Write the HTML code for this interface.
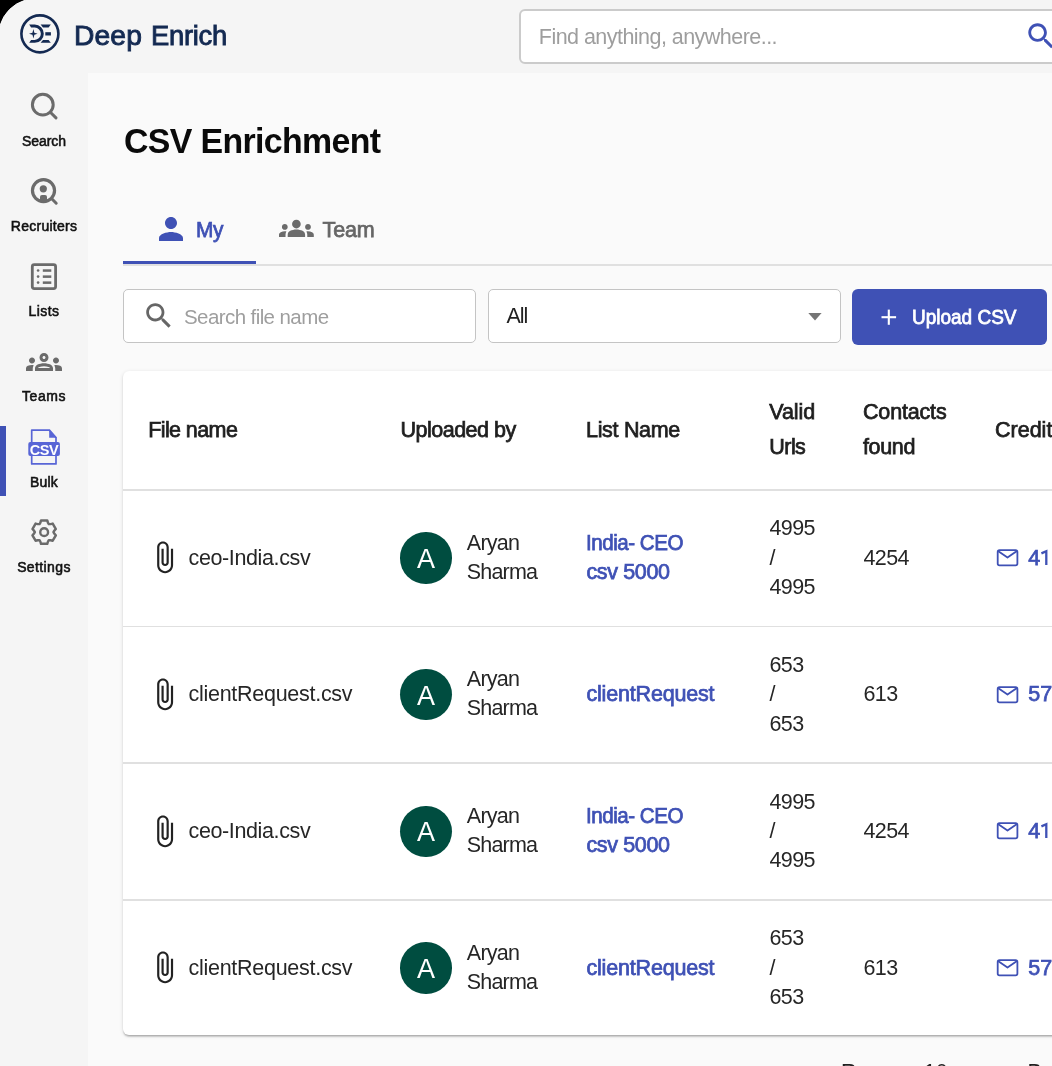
<!DOCTYPE html>
<html><head><meta charset="utf-8"><style>
html,body{margin:0;padding:0;}
body{width:1052px;height:1066px;overflow:hidden;position:relative;background:#000;font-family:"Liberation Sans",sans-serif;-webkit-font-smoothing:antialiased;}
#root{position:absolute;left:0;top:0;width:1052px;height:1066px;will-change:transform;}
.t{position:absolute;white-space:nowrap;}
svg{overflow:visible;}
</style></head><body><div id="root">
<div style="position:absolute;left:0;top:0;width:1052px;height:1066px;background:#f5f5f5;"></div>
<svg style="position:absolute;left:0;top:0" width="30" height="30"><path d="M0 0 L25.5 0 Q6.2 6.2 0 25.5 Z" fill="#000"/><path d="M25.5 0 Q6.2 6.2 0 25.5" fill="none" stroke="#fff" stroke-width="0.9"/></svg>
<div style="position:absolute;left:88px;top:73px;width:964px;height:993px;background:#fafafa;"></div>
<svg style="position:absolute;left:0;top:0" width="80" height="72" viewBox="0 0 80 72">
<circle cx="39.9" cy="33.85" r="18.5" fill="none" stroke="#142a52" stroke-width="2.6"/>
<path fill="#142a52" d="M29.2 24.6 L34.7 24.6 A9.1 9.1 0 0 1 34.7 42.8 L29.2 42.8 L31.1 39.9 L34.7 39.9 A6.1 6.1 0 0 0 34.7 27.6 L31.1 27.6 Z"/>
<path fill="#142a52" d="M40.6 24.6 L50.8 24.6 L48.6 27.6 L43.0 27.6 Z"/>
<path fill="#142a52" d="M45.3 32.2 L50.9 32.2 L50.9 35.5 L45.3 35.5 Z"/>
<path fill="#142a52" d="M43.0 39.9 L48.6 39.9 L50.8 42.8 L40.6 42.8 Z"/>
<path fill="#142a52" d="M33.4 28.9 L34.35 32.85 L37.6 33.8 L34.35 34.75 L33.4 38.6 L32.45 34.75 L29.0 33.8 L32.45 32.85 Z"/>
</svg>
<div class="t" style="left:73.60px;top:22.00px;font-size:28.00px;line-height:28.00px;transform:scaleX(1.0079);transform-origin:0 0;letter-spacing:0.132px;color:#142a52;font-weight:400;-webkit-text-stroke:0.9px #142a52;">Deep</div>
<div class="t" style="left:151.00px;top:22.00px;font-size:28.00px;line-height:28.00px;transform:scaleX(0.9788);transform-origin:0 0;letter-spacing:-0.287px;color:#142a52;font-weight:400;-webkit-text-stroke:0.9px #142a52;">Enrich</div>
<div style="position:absolute;left:519px;top:9px;width:560px;height:55px;box-sizing:border-box;border:2px solid #cbcbcb;border-radius:6px;background:#fff;"></div>
<div class="t" style="left:538.80px;top:27.00px;font-size:21.50px;line-height:21.50px;letter-spacing:-0.537px;color:#9e9e9e;">Find anything, anywhere...</div>
<svg style="position:absolute;left:1023.7px;top:18.9px" width="34.3" height="34.3" viewBox="0 0 24 24"><path fill="#3f51b5" d="M15.5 14h-.79l-.28-.27C15.41 12.59 16 11.11 16 9.5 16 5.91 13.09 3 9.5 3S3 5.91 3 9.5 5.91 16 9.5 16c1.61 0 3.09-.59 4.23-1.57l.27.28v.79l5 4.99L20.49 19l-4.99-5zm-6 0C7.01 14 5 11.99 5 9.5S7.01 5 9.5 5 14 7.01 14 9.5 11.99 14 9.5 14z"/></svg>
<div style="position:absolute;left:0;top:426px;width:6px;height:70px;background:#3f51b5;"></div>
<svg style="position:absolute;left:0;top:80px" width="88" height="50"><circle cx="42.8" cy="24.7" r="10.4" fill="none" stroke="#6b6b6b" stroke-width="3"/><line x1="50.6" y1="32.5" x2="56" y2="37.9" stroke="#6b6b6b" stroke-width="3" stroke-linecap="round"/></svg>
<div class="t" style="left:21.95px;top:134.00px;font-size:14.00px;line-height:14.00px;-webkit-text-stroke:0.55px #111;letter-spacing:-0.043px;color:#111;">Search</div>
<svg style="position:absolute;left:0;top:165px" width="88" height="50"><circle cx="43.5" cy="25.6" r="11.05" fill="none" stroke="#6b6b6b" stroke-width="3.2"/><circle cx="43.3" cy="23.8" r="3.6" fill="#6b6b6b"/><path d="M40 36 L40 32 Q40 30 42 30 L45 30 Q47 30 47 32 L47 36 Z" fill="#6b6b6b"/><line x1="51.8" y1="33.8" x2="56.2" y2="38.2" stroke="#6b6b6b" stroke-width="3" stroke-linecap="round"/></svg>
<div class="t" style="left:10.80px;top:219.00px;font-size:14.00px;line-height:14.00px;-webkit-text-stroke:0.55px #111;letter-spacing:0.261px;color:#111;">Recruiters</div>
<svg style="position:absolute;left:0;top:250px" width="88" height="50"><rect x="32.3" y="14.7" width="23.3" height="23.9" rx="2" fill="none" stroke="#6b6b6b" stroke-width="2.8"/><circle cx="38.1" cy="20.5" r="1.3" fill="#6b6b6b"/><circle cx="38.1" cy="26.6" r="1.3" fill="#6b6b6b"/><circle cx="38.1" cy="32.6" r="1.3" fill="#6b6b6b"/><rect x="42.8" y="19.3" width="8.5" height="2.5" fill="#6b6b6b"/><rect x="42.8" y="25.4" width="8.5" height="2.5" fill="#6b6b6b"/><rect x="42.8" y="31.4" width="8.5" height="2.5" fill="#6b6b6b"/></svg>
<div class="t" style="left:28.50px;top:304.00px;font-size:14.00px;line-height:14.00px;-webkit-text-stroke:0.55px #111;letter-spacing:0.443px;color:#111;">Lists</div>
<svg style="position:absolute;left:26.4px;top:344px" width="36" height="36" viewBox="0 0 24 24"><path fill="#6b6b6b" d="M4,13c1.1,0,2-0.9,2-2c0-1.1-0.9-2-2-2s-2,0.9-2,2C2,12.1,2.9,13,4,13z M5.13,14.1C4.76,14.04,4.39,14,4,14c-0.99,0-1.93,0.21-2.78,0.58C0.48,14.9,0,15.62,0,16.43V18l4.5,0v-1.61C4.5,15.56,4.73,14.78,5.13,14.1z M20,13c1.1,0,2-0.9,2-2c0-1.1-0.9-2-2-2s-2,0.9-2,2C18,12.1,18.9,13,20,13z M24,16.43c0-0.81-0.48-1.53-1.22-1.85C21.93,14.21,20.99,14,20,14c-0.39,0-0.76,0.04-1.13,0.1c0.4,0.68,0.63,1.46,0.63,2.29V18l4.5,0V16.43z M16.24,13.65c-1.17-0.52-2.61-0.9-4.24-0.9c-1.63,0-3.070.39-4.24,0.9C6.68,14.130,6,15.21,6,16.39V18h12v-1.61C18,15.21,17.32,14.13,16.24,13.65z M8.07,16c0.09-0.23,0.13-0.39,0.91-0.69c0.97-0.38,1.99-0.56,3.02-0.56s2.05,0.18,3.02,0.56c0.77,0.3,0.81,0.46,0.91,0.69H8.07z M12,8c0.55,0,1,0.45,1,1s-0.45,1-1,1s-1-0.45-1-1S11.450,8,12,8 M12,6c-1.66,0-3,1.34-3,3c0,1.66,1.34,3,3,3s3-1.34,3-3C15,7.34,13.66,6,12,6L12,6z"/></svg>
<div class="t" style="left:22.10px;top:389.00px;font-size:14.00px;line-height:14.00px;-webkit-text-stroke:0.55px #111;letter-spacing:0.513px;color:#111;">Teams</div>
<svg style="position:absolute;left:0;top:420px" width="88" height="50">
<path d="M31.7 10.1 L49.4 10.1 L56 17.6 L56 43.9 L31.7 43.9 Z" fill="none" stroke="#5865d6" stroke-width="1.7" stroke-linejoin="round"/>
<path d="M49.2 9.4 L56.8 17.8 L49.2 17.8 Z" fill="#5865d6"/>
<rect x="28.3" y="22" width="31.6" height="14" rx="2" fill="#5865d6"/>
<text x="44.1" y="34.6" text-anchor="middle" font-family="Liberation Sans" font-weight="700" font-size="14.5" fill="#fff" letter-spacing="-0.4">CSV</text>
</svg>
<div class="t" style="left:30.00px;top:475.00px;font-size:14.00px;line-height:14.00px;-webkit-text-stroke:0.55px #111;letter-spacing:0.191px;color:#111;">Bulk</div>
<svg style="position:absolute;left:0;top:0" width="88" height="560"><path d="M40.39 522.56 L41.02 520.46 L47.28 520.46 L47.91 522.56 L48.80 524.10 L50.58 524.10 L52.71 523.59 L55.84 529.02 L54.33 530.61 L53.45 532.15 L54.33 533.69 L55.84 535.28 L52.71 540.71 L50.58 540.20 L48.80 540.20 L47.91 541.74 L47.28 543.84 L41.02 543.84 L40.39 541.74 L39.50 540.20 L37.72 540.20 L35.59 540.71 L32.46 535.28 L33.97 533.69 L34.85 532.15 L33.97 530.61 L32.46 529.02 L35.59 523.59 L37.72 524.10 L39.50 524.10 Z" fill="none" stroke="#6b6b6b" stroke-width="2.45" stroke-linejoin="round"/><circle cx="44.15" cy="532.15" r="3.9" fill="none" stroke="#6b6b6b" stroke-width="2.4"/></svg>
<div class="t" style="left:17.15px;top:560.00px;font-size:14.00px;line-height:14.00px;-webkit-text-stroke:0.55px #111;letter-spacing:0.389px;color:#111;">Settings</div>
<div class="t" style="left:124.30px;top:123.00px;font-size:35.00px;line-height:35.00px;font-weight:700;transform:scaleX(0.9675);transform-origin:0 0;letter-spacing:-0.658px;color:#0a0a0a;">CSV Enrichment</div>
<svg style="position:absolute;left:152.9px;top:211.3px" width="36" height="36" viewBox="0 0 24 24"><path fill="#3f51b5" d="M12 12c2.21 0 4-1.79 4-4s-1.79-4-4-4-4 1.79-4 4 1.79 4 4 4zm0 2c-2.67 0-8 1.34-8 4v2h16v-2c0-2.66-5.33-4-8-4z"/></svg>
<div class="t" style="left:196.20px;top:220.00px;font-size:21.50px;line-height:21.50px;-webkit-text-stroke:0.75px #3f51b5;transform:scaleX(0.9711);transform-origin:0 0;letter-spacing:-0.427px;color:#3f51b5;">My</div>
<svg style="position:absolute;left:279.2px;top:211.3px" width="34.8" height="34.8" viewBox="0 0 24 24"><path fill="#6b6b6b" d="M12 12.75c1.63 0 3.07.39 4.24.9 1.08.48 1.76 1.56 1.76 2.73V18H6v-1.61c0-1.18.68-2.26 1.76-2.73 1.17-.52 2.61-.91 4.24-.91zM4 13c1.1 0 2-.9 2-2s-.9-2-2-2-2 .9-2 2 .9 2 2 2zm1.13 1.1c-.37-.06-.74-.1-1.13-.1-.99 0-1.93.21-2.78.58C.48 14.9 0 15.62 0 16.43V18h4.5v-1.61c0-.83.23-1.610.63-2.29zM20 13c1.1 0 2-.9 2-2s-.9-2-2-2-2 .9-2 2 .9 2 2 2zm4 3.43c0-.81-.48-1.53-1.22-1.85-.85-.37-1.79-.58-2.78-.58-.39 0-.76.04-1.13.1.4.68.63 1.46.63 2.29V18H24v-1.57zM12 6c1.66 0 3 1.34 3 3s-1.34 3-3 3-3-1.34-3-3 1.34-3 3-3z"/></svg>
<div class="t" style="left:322.60px;top:220.00px;font-size:21.50px;line-height:21.50px;-webkit-text-stroke:0.75px #666;letter-spacing:-0.168px;color:#666;">Team</div>
<div style="position:absolute;left:123px;top:264px;width:929px;height:2px;background:#e0e0e0;"></div>
<div style="position:absolute;left:123px;top:261px;width:132.7px;height:3px;background:#3f51b5;"></div>
<div style="position:absolute;left:123px;top:289px;width:353px;height:54px;box-sizing:border-box;border:1.5px solid #c4c4c4;border-radius:5px;background:#fff;"></div>
<svg style="position:absolute;left:141.7px;top:298.6px" width="33.6" height="33.6" viewBox="0 0 24 24"><path fill="#666" d="M15.5 14h-.79l-.28-.27C15.41 12.59 16 11.11 16 9.5 16 5.91 13.09 3 9.5 3S3 5.91 3 9.5 5.91 16 9.5 16c1.61 0 3.09-.59 4.23-1.57l.27.28v.79l5 4.99L20.49 19l-4.99-5zm-6 0C7.01 14 5 11.990 5 9.5S7.01 5 9.5 5 14 7.01 14 9.5 11.99 14 9.5 14z"/></svg>
<div class="t" style="left:184.00px;top:307.00px;font-size:20.50px;line-height:20.50px;letter-spacing:-0.583px;color:#9e9e9e;">Search file name</div>
<div style="position:absolute;left:487.5px;top:289px;width:353px;height:54px;box-sizing:border-box;border:1.5px solid #c4c4c4;border-radius:5px;background:#fff;"></div>
<div class="t" style="left:506.40px;top:306.00px;font-size:21.50px;line-height:21.50px;letter-spacing:-1.031px;color:#212121;">All</div>
<svg style="position:absolute;left:800px;top:305px" width="30" height="20"><path d="M8.3 8 L21.6 8 L15 15.4 Z" fill="#757575"/></svg>
<div style="position:absolute;left:852px;top:289px;width:194.5px;height:56px;border-radius:6px;background:#3f51b5;"></div>
<svg style="position:absolute;left:870px;top:300px" width="40" height="35"><line x1="11.5" y1="17.2" x2="26.1" y2="17.2" stroke="#fff" stroke-width="2.1"/><line x1="18.8" y1="9.6" x2="18.8" y2="24.8" stroke="#fff" stroke-width="2.1"/></svg>
<div class="t" style="left:912.20px;top:307.00px;font-size:20.50px;line-height:20.50px;transform:scaleX(0.9263);transform-origin:0 0;color:#fff;-webkit-text-stroke:0.8px #fff;">Upload CSV</div>
<div style="position:absolute;left:123px;top:371.4px;width:1000px;height:663.6px;background:#fff;border-radius:6px;box-shadow:0 2px 1.5px -1px rgba(0,0,0,0.17),0 1.5px 1.5px 0 rgba(0,0,0,0.12),0 1px 4px 0 rgba(0,0,0,0.11);"></div>
<div class="t" style="left:148.20px;top:420.00px;font-size:21.50px;line-height:21.50px;-webkit-text-stroke:0.75px #1f1f1f;letter-spacing:-0.589px;color:#1f1f1f;">File name</div>
<div class="t" style="left:400.50px;top:420.00px;font-size:21.50px;line-height:21.50px;-webkit-text-stroke:0.75px #1f1f1f;letter-spacing:-0.502px;color:#1f1f1f;">Uploaded by</div>
<div class="t" style="left:586.00px;top:420.00px;font-size:21.50px;line-height:21.50px;-webkit-text-stroke:0.75px #1f1f1f;letter-spacing:-0.309px;color:#1f1f1f;">List Name</div>
<div class="t" style="left:769.30px;top:402.00px;font-size:21.50px;line-height:21.50px;-webkit-text-stroke:0.75px #1f1f1f;letter-spacing:-0.102px;color:#1f1f1f;">Valid</div>
<div class="t" style="left:769.30px;top:437.00px;font-size:21.50px;line-height:21.50px;-webkit-text-stroke:0.75px #1f1f1f;letter-spacing:-0.553px;color:#1f1f1f;">Urls</div>
<div class="t" style="left:863.00px;top:402.00px;font-size:21.50px;line-height:21.50px;-webkit-text-stroke:0.75px #1f1f1f;letter-spacing:-0.168px;color:#1f1f1f;">Contacts</div>
<div class="t" style="left:863.00px;top:437.00px;font-size:21.50px;line-height:21.50px;-webkit-text-stroke:0.75px #1f1f1f;letter-spacing:-0.360px;color:#1f1f1f;">found</div>
<div class="t" style="left:995.00px;top:420.00px;font-size:21.50px;line-height:21.50px;-webkit-text-stroke:0.75px #1f1f1f;color:#1f1f1f;">Credits</div>
<div style="position:absolute;left:123px;top:489.00px;width:929px;height:1.5px;background:#e0e0e0;"></div>
<svg style="position:absolute;left:147px;top:540.20px" width="34.8" height="34.8" viewBox="0 0 24 24"><path fill="#222" d="M16.5 6v11.5c0 2.21-1.79 4-4 4s-4-1.79-4-4V5c0-1.38 1.12-2.5 2.5-2.5s2.5 1.12 2.5 2.5v10.5c0 .55-.45 1-1 1s-1-.45-1-1V6H10v9.5c0 1.38 1.12 2.5 2.5 2.5s2.5-1.12 2.5-2.5V5c0-2.21-1.79-4-4-4S7 2.79 7 5v12.5c0 3.04 2.46 5.5 5.5 5.5s5.5-2.46 5.5-5.5V6h-1.5z"/></svg>
<div class="t" style="left:188.50px;top:548.00px;font-size:21.50px;line-height:21.50px;letter-spacing:-0.374px;color:#262626;">ceo-India.csv</div>
<div style="position:absolute;left:400.3px;top:532.20px;width:51.4px;height:51.4px;border-radius:50%;background:#004d40;"></div>
<div class="t" style="left:417.00px;top:546.00px;font-size:27.00px;line-height:27.00px;color:#fff;">A</div>
<div class="t" style="left:466.80px;top:533.00px;font-size:21.50px;line-height:21.50px;letter-spacing:-0.733px;color:#262626;">Aryan</div>
<div class="t" style="left:466.80px;top:562.00px;font-size:21.50px;line-height:21.50px;letter-spacing:-0.813px;color:#262626;">Sharma</div>
<div class="t" style="left:586.40px;top:533.00px;font-size:21.50px;line-height:21.50px;-webkit-text-stroke:0.75px #3f51b5;transform:scaleX(0.9556);transform-origin:0 0;letter-spacing:-0.494px;color:#3f51b5;">India- CEO</div>
<div class="t" style="left:586.40px;top:562.00px;font-size:21.50px;line-height:21.50px;-webkit-text-stroke:0.75px #3f51b5;letter-spacing:-0.356px;color:#3f51b5;">csv 5000</div>
<div class="t" style="left:769.40px;top:518.00px;font-size:21.50px;line-height:21.50px;letter-spacing:-0.557px;color:#262626;">4995</div>
<div class="t" style="left:769.40px;top:548.00px;font-size:21.50px;line-height:21.50px;color:#262626;">/</div>
<div class="t" style="left:769.40px;top:577.00px;font-size:21.50px;line-height:21.50px;letter-spacing:-0.557px;color:#262626;">4995</div>
<div class="t" style="left:863.40px;top:548.00px;font-size:21.50px;line-height:21.50px;letter-spacing:-0.557px;color:#262626;">4254</div>
<svg style="position:absolute;left:990px;top:540.00px" width="36" height="30"><rect x="7.7" y="10.1" width="19.7" height="15.3" rx="1.8" fill="none" stroke="#3f51b5" stroke-width="1.8"/><polyline points="8,11 17.5,17.6 27,11" fill="none" stroke="#3f51b5" stroke-width="1.8" stroke-linejoin="round"/></svg>
<div class="t" style="left:1028.30px;top:548.00px;font-size:21.50px;line-height:21.50px;-webkit-text-stroke:0.75px #3f51b5;color:#3f51b5;">4</div>
<svg style="position:absolute;left:1030px;top:549.80px" width="22" height="20"><path d="M11.4 3.4 L16.3 1.2 L16.3 15.0" fill="none" stroke="#3f51b5" stroke-width="2.3" stroke-linejoin="miter" stroke-linecap="butt"/></svg>
<div style="position:absolute;left:123px;top:625.70px;width:929px;height:1.5px;background:#e0e0e0;"></div>
<svg style="position:absolute;left:147px;top:676.90px" width="34.8" height="34.8" viewBox="0 0 24 24"><path fill="#222" d="M16.5 6v11.5c0 2.21-1.79 4-4 4s-4-1.79-4-4V5c0-1.38 1.12-2.5 2.5-2.5s2.5 1.12 2.5 2.5v10.5c0 .55-.45 1-1 1s-1-.45-1-1V6H10v9.5c0 1.38 1.12 2.5 2.5 2.5s2.5-1.12 2.5-2.5V5c0-2.21-1.79-4-4-4S7 2.79 7 5v12.5c0 3.04 2.46 5.5 5.5 5.5s5.5-2.46 5.5-5.5V6h-1.5z"/></svg>
<div class="t" style="left:188.50px;top:684.00px;font-size:21.50px;line-height:21.50px;letter-spacing:-0.276px;color:#262626;">clientRequest.csv</div>
<div style="position:absolute;left:400.3px;top:668.90px;width:51.4px;height:51.4px;border-radius:50%;background:#004d40;"></div>
<div class="t" style="left:417.00px;top:683.00px;font-size:27.00px;line-height:27.00px;color:#fff;">A</div>
<div class="t" style="left:466.80px;top:669.00px;font-size:21.50px;line-height:21.50px;letter-spacing:-0.733px;color:#262626;">Aryan</div>
<div class="t" style="left:466.80px;top:698.00px;font-size:21.50px;line-height:21.50px;letter-spacing:-0.813px;color:#262626;">Sharma</div>
<div class="t" style="left:586.40px;top:684.00px;font-size:21.50px;line-height:21.50px;-webkit-text-stroke:0.75px #3f51b5;letter-spacing:-0.175px;color:#3f51b5;">clientRequest</div>
<div class="t" style="left:769.40px;top:655.00px;font-size:21.50px;line-height:21.50px;letter-spacing:-0.557px;color:#262626;">653</div>
<div class="t" style="left:769.40px;top:684.00px;font-size:21.50px;line-height:21.50px;color:#262626;">/</div>
<div class="t" style="left:769.40px;top:714.00px;font-size:21.50px;line-height:21.50px;letter-spacing:-0.557px;color:#262626;">653</div>
<div class="t" style="left:863.40px;top:684.00px;font-size:21.50px;line-height:21.50px;letter-spacing:-0.557px;color:#262626;">613</div>
<svg style="position:absolute;left:990px;top:676.70px" width="36" height="30"><rect x="7.7" y="10.1" width="19.7" height="15.3" rx="1.8" fill="none" stroke="#3f51b5" stroke-width="1.8"/><polyline points="8,11 17.5,17.6 27,11" fill="none" stroke="#3f51b5" stroke-width="1.8" stroke-linejoin="round"/></svg>
<div class="t" style="left:1028.30px;top:684.00px;font-size:21.50px;line-height:21.50px;-webkit-text-stroke:0.75px #3f51b5;color:#3f51b5;">57</div>
<div style="position:absolute;left:123px;top:762.40px;width:929px;height:1.5px;background:#e0e0e0;"></div>
<svg style="position:absolute;left:147px;top:813.60px" width="34.8" height="34.8" viewBox="0 0 24 24"><path fill="#222" d="M16.5 6v11.5c0 2.21-1.79 4-4 4s-4-1.79-4-4V5c0-1.38 1.12-2.5 2.5-2.5s2.5 1.12 2.5 2.5v10.5c0 .55-.45 1-1 1s-1-.45-1-1V6H10v9.5c0 1.38 1.12 2.5 2.5 2.5s2.5-1.12 2.5-2.5V5c0-2.21-1.79-4-4-4S7 2.79 7 5v12.5c0 3.04 2.46 5.5 5.5 5.5s5.5-2.46 5.5-5.5V6h-1.5z"/></svg>
<div class="t" style="left:188.50px;top:821.00px;font-size:21.50px;line-height:21.50px;letter-spacing:-0.374px;color:#262626;">ceo-India.csv</div>
<div style="position:absolute;left:400.3px;top:805.60px;width:51.4px;height:51.4px;border-radius:50%;background:#004d40;"></div>
<div class="t" style="left:417.00px;top:819.00px;font-size:27.00px;line-height:27.00px;color:#fff;">A</div>
<div class="t" style="left:466.80px;top:806.00px;font-size:21.50px;line-height:21.50px;letter-spacing:-0.733px;color:#262626;">Aryan</div>
<div class="t" style="left:466.80px;top:835.00px;font-size:21.50px;line-height:21.50px;letter-spacing:-0.813px;color:#262626;">Sharma</div>
<div class="t" style="left:586.40px;top:806.00px;font-size:21.50px;line-height:21.50px;-webkit-text-stroke:0.75px #3f51b5;transform:scaleX(0.9556);transform-origin:0 0;letter-spacing:-0.494px;color:#3f51b5;">India- CEO</div>
<div class="t" style="left:586.40px;top:835.00px;font-size:21.50px;line-height:21.50px;-webkit-text-stroke:0.75px #3f51b5;letter-spacing:-0.356px;color:#3f51b5;">csv 5000</div>
<div class="t" style="left:769.40px;top:792.00px;font-size:21.50px;line-height:21.50px;letter-spacing:-0.557px;color:#262626;">4995</div>
<div class="t" style="left:769.40px;top:821.00px;font-size:21.50px;line-height:21.50px;color:#262626;">/</div>
<div class="t" style="left:769.40px;top:850.00px;font-size:21.50px;line-height:21.50px;letter-spacing:-0.557px;color:#262626;">4995</div>
<div class="t" style="left:863.40px;top:821.00px;font-size:21.50px;line-height:21.50px;letter-spacing:-0.557px;color:#262626;">4254</div>
<svg style="position:absolute;left:990px;top:813.40px" width="36" height="30"><rect x="7.7" y="10.1" width="19.7" height="15.3" rx="1.8" fill="none" stroke="#3f51b5" stroke-width="1.8"/><polyline points="8,11 17.5,17.6 27,11" fill="none" stroke="#3f51b5" stroke-width="1.8" stroke-linejoin="round"/></svg>
<div class="t" style="left:1028.30px;top:821.00px;font-size:21.50px;line-height:21.50px;-webkit-text-stroke:0.75px #3f51b5;color:#3f51b5;">4</div>
<svg style="position:absolute;left:1030px;top:823.20px" width="22" height="20"><path d="M11.4 3.4 L16.3 1.2 L16.3 15.0" fill="none" stroke="#3f51b5" stroke-width="2.3" stroke-linejoin="miter" stroke-linecap="butt"/></svg>
<div style="position:absolute;left:123px;top:899.10px;width:929px;height:1.5px;background:#e0e0e0;"></div>
<svg style="position:absolute;left:147px;top:950.30px" width="34.8" height="34.8" viewBox="0 0 24 24"><path fill="#222" d="M16.5 6v11.5c0 2.21-1.79 4-4 4s-4-1.79-4-4V5c0-1.38 1.12-2.5 2.5-2.5s2.5 1.12 2.5 2.5v10.5c0 .55-.45 1-1 1s-1-.45-1-1V6H10v9.5c0 1.38 1.12 2.5 2.5 2.5s2.5-1.12 2.5-2.5V5c0-2.21-1.79-4-4-4S7 2.79 7 5v12.5c0 3.04 2.46 5.5 5.5 5.5s5.5-2.46 5.5-5.5V6h-1.5z"/></svg>
<div class="t" style="left:188.50px;top:958.00px;font-size:21.50px;line-height:21.50px;letter-spacing:-0.276px;color:#262626;">clientRequest.csv</div>
<div style="position:absolute;left:400.3px;top:942.30px;width:51.4px;height:51.4px;border-radius:50%;background:#004d40;"></div>
<div class="t" style="left:417.00px;top:956.00px;font-size:27.00px;line-height:27.00px;color:#fff;">A</div>
<div class="t" style="left:466.80px;top:943.00px;font-size:21.50px;line-height:21.50px;letter-spacing:-0.733px;color:#262626;">Aryan</div>
<div class="t" style="left:466.80px;top:972.00px;font-size:21.50px;line-height:21.50px;letter-spacing:-0.813px;color:#262626;">Sharma</div>
<div class="t" style="left:586.40px;top:958.00px;font-size:21.50px;line-height:21.50px;-webkit-text-stroke:0.75px #3f51b5;letter-spacing:-0.175px;color:#3f51b5;">clientRequest</div>
<div class="t" style="left:769.40px;top:928.00px;font-size:21.50px;line-height:21.50px;letter-spacing:-0.557px;color:#262626;">653</div>
<div class="t" style="left:769.40px;top:958.00px;font-size:21.50px;line-height:21.50px;color:#262626;">/</div>
<div class="t" style="left:769.40px;top:987.00px;font-size:21.50px;line-height:21.50px;letter-spacing:-0.557px;color:#262626;">653</div>
<div class="t" style="left:863.40px;top:958.00px;font-size:21.50px;line-height:21.50px;letter-spacing:-0.557px;color:#262626;">613</div>
<svg style="position:absolute;left:990px;top:950.10px" width="36" height="30"><rect x="7.7" y="10.1" width="19.7" height="15.3" rx="1.8" fill="none" stroke="#3f51b5" stroke-width="1.8"/><polyline points="8,11 17.5,17.6 27,11" fill="none" stroke="#3f51b5" stroke-width="1.8" stroke-linejoin="round"/></svg>
<div class="t" style="left:1028.30px;top:958.00px;font-size:21.50px;line-height:21.50px;-webkit-text-stroke:0.75px #3f51b5;color:#3f51b5;">57</div>
<div class="t" style="left:841.00px;top:1062.00px;font-size:21.50px;line-height:21.50px;color:#212121;">Rows per page:</div>
<div class="t" style="left:923.70px;top:1062.00px;font-size:21.50px;line-height:21.50px;color:#212121;">10</div>
<div class="t" style="left:1027.50px;top:1062.00px;font-size:21.50px;line-height:21.50px;color:#212121;">B</div>
</div></body></html>
